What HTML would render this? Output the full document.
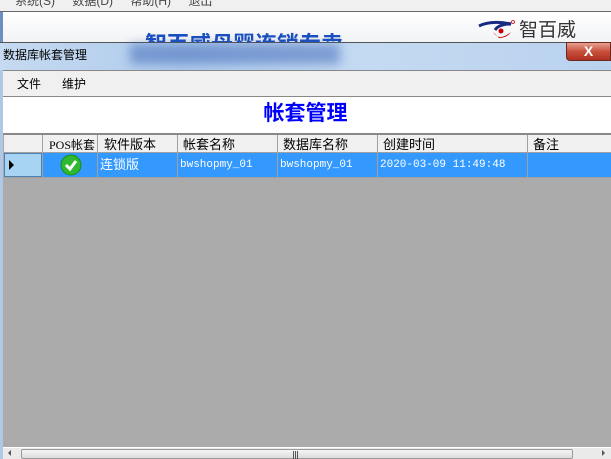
<!DOCTYPE html>
<html><head><meta charset="utf-8"><style>
*{margin:0;padding:0;box-sizing:border-box}
body{width:611px;height:459px;overflow:hidden;position:relative;background:#fff;font-family:"Liberation Sans","Noto Sans CJK SC",sans-serif;font-size:12px;color:#000}
.a{position:absolute}
</style></head><body>
<div class="a" style="left:0;top:0;width:611px;height:11px;background:#f0f0f0;overflow:hidden">
<div class="a" style="left:15px;top:-8px;font-size:12px;color:#444;white-space:nowrap;word-spacing:14px">系统(S) 数据(D) 帮助(H) 退出</div></div>
<div class="a" style="left:0;top:11px;width:611px;height:1px;background:#666"></div>
<div class="a" style="left:0;top:12px;width:3px;height:30px;background:#6a8fc0"></div>
<div class="a" style="left:3px;top:12px;width:608px;height:30px;background:linear-gradient(#fff,#f2f3f5)"></div>
<div class="a" style="left:145px;top:30px;font-size:22px;font-weight:bold;color:#1a4fc0;white-space:nowrap;height:12px;overflow:hidden;line-height:30px">智百威母婴连锁专卖</div>
<svg class="a" style="left:477px;top:18px" width="42" height="24" viewBox="0 0 42 24"><path d="M2 8 Q14 2 34 6 Q22 6 18 12" fill="none" stroke="#1a2a80" stroke-width="3"/><path d="M16 14 Q22 24 34 14 Q30 20 22 20" fill="#c00"/><circle cx="24" cy="13" r="2.5" fill="#c00"/><circle cx="36" cy="4" r="1.5" fill="none" stroke="#c00" stroke-width=".8"/></svg>
<div class="a" style="left:519px;top:19px;font-size:19px;color:#333;white-space:nowrap;line-height:24px">智百威</div>
<div class="a" style="left:0;top:42px;width:611px;height:28px;background:linear-gradient(90deg,#c6daf1,#aecbec 30%,#c4daf2 60%,#b9d2ee);border-top:1px solid #555"></div>
<div class="a" style="left:130px;top:44px;width:210px;height:20px;background:#2d57b0;filter:blur(5px);opacity:.45"></div>
<div class="a" style="left:3px;top:47px;font-size:12px;line-height:16px">数据库帐套管理</div>
<div class="a" style="left:566px;top:42px;width:45px;height:19px;background:linear-gradient(#e8a090,#c8503c 50%,#b03020);border:1px solid #6a2a20;border-radius:0 0 0 4px;color:#fff;font-weight:bold;font-size:14px;text-align:center;line-height:16px">X</div>
<div class="a" style="left:0;top:70px;width:3px;height:389px;background:#b0c8e8"></div>
<div class="a" style="left:3px;top:70px;width:608px;height:26px;background:#f0f0f0;border-top:1px solid #888"></div>
<div class="a" style="left:17px;top:76px;line-height:16px">文件</div>
<div class="a" style="left:62px;top:76px;line-height:16px;color:#000">维护</div>
<div class="a" style="left:3px;top:96px;width:608px;height:37px;background:#fff;border-top:1px solid #888"></div>
<div class="a" style="left:0;top:100px;width:611px;text-align:center;font-size:21px;font-weight:bold;color:#0000ff;line-height:28px">帐套管理</div>
<div class="a" style="left:3px;top:133px;width:608px;height:2px;background:#888"></div>
<div class="a" style="left:3px;top:135px;width:608px;height:312px;background:#ababab"></div>
<div class="a" style="left:4px;top:135px;width:607px;height:18px;background:#f0f0f0;border-bottom:1px solid #a0a0a0"></div>
<div class="a" style="left:4px;top:153px;width:607px;height:24px;background:#3399ff"></div>
<div class="a" style="left:4px;top:153px;width:38px;height:24px;background:#a8d4f4;border:1px solid #5080b0"></div>
<div class="a" style="left:9px;top:160px;width:0;height:0;border-left:5px solid #000;border-top:5px solid transparent;border-bottom:5px solid transparent"></div>
<div style="position:absolute;left:0;top:136px;white-space:nowrap;line-height:18px;font-size:13px">
<span class="a" style="left:49px;font-family:'Liberation Serif','Noto Sans CJK SC',serif;font-size:12px">POS帐套</span>
<span class="a" style="left:104px">软件版本</span>
<span class="a" style="left:183px">帐套名称</span>
<span class="a" style="left:283px">数据库名称</span>
<span class="a" style="left:383px">创建时间</span>
<span class="a" style="left:533px">备注</span>
</div>
<div class="a" style="left:42px;top:135px;width:1px;height:42px;background:#a0a0a0"></div>
<div class="a" style="left:97px;top:135px;width:1px;height:42px;background:#a0a0a0"></div>
<div class="a" style="left:177px;top:135px;width:1px;height:42px;background:#a0a0a0"></div>
<div class="a" style="left:277px;top:135px;width:1px;height:42px;background:#a0a0a0"></div>
<div class="a" style="left:377px;top:135px;width:1px;height:42px;background:#a0a0a0"></div>
<div class="a" style="left:527px;top:135px;width:1px;height:42px;background:#a0a0a0"></div>
<div class="a" style="left:4px;top:177px;width:607px;height:1px;background:#a0a0a0"></div>
<svg class="a" style="left:60px;top:154px" width="22" height="22"><circle cx="11" cy="11" r="10" fill="#2fb830" stroke="#1a8a1a"/><path d="M6 11 L10 15 L16 7" fill="none" stroke="#fff" stroke-width="3"/></svg>
<div style="position:absolute;left:0;top:156px;white-space:nowrap;line-height:18px;color:#fff">
<span class="a" style="left:100px;font-size:13px">连锁版</span>
<span class="a" style="left:180px;font-family:'Liberation Mono',monospace;font-size:11px">bwshopmy_01</span>
<span class="a" style="left:280px;font-family:'Liberation Mono',monospace;font-size:11px">bwshopmy_01</span>
<span class="a" style="left:380px;font-family:'Liberation Mono',monospace;font-size:11px">2020-03-09 11:49:48</span>
</div>
<div class="a" style="left:3px;top:447px;width:608px;height:12px;background:#eaeaea;border-top:1px solid #fff"></div>
<div class="a" style="left:8px;top:450px;width:0;height:0;border-right:3px solid #555;border-top:3px solid transparent;border-bottom:3px solid transparent"></div>
<div class="a" style="left:602px;top:450px;width:0;height:0;border-left:3px solid #555;border-top:3px solid transparent;border-bottom:3px solid transparent"></div>
<div class="a" style="left:21px;top:449px;width:552px;height:10px;background:linear-gradient(#f4f4f4,#dcdcdc);border:1px solid #999;border-radius:2px"></div>
<div class="a" style="left:293px;top:451px;width:5px;height:8px;border-left:1px solid #555;border-right:1px solid #555"></div>
<div class="a" style="left:295px;top:451px;width:1px;height:8px;background:#555"></div>
</body></html>
